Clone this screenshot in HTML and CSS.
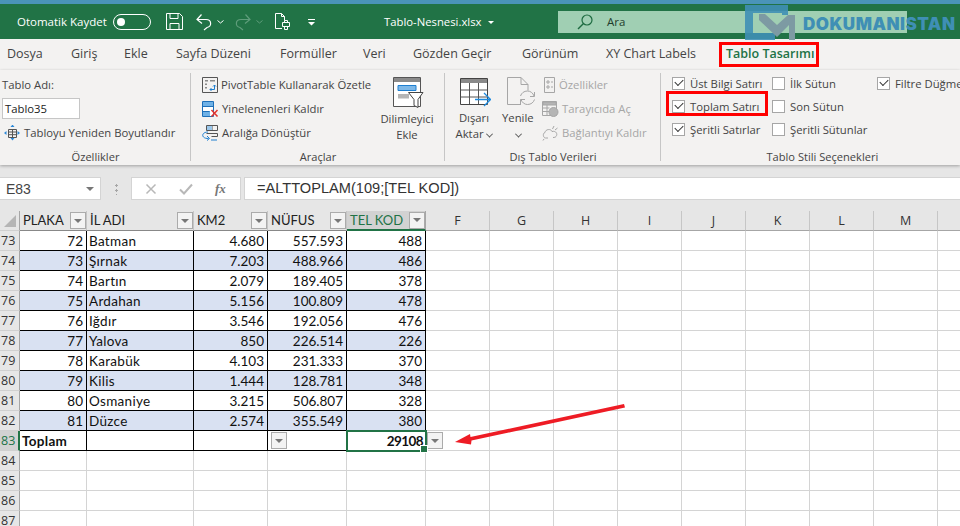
FILE: index.html
```html
<!DOCTYPE html>
<html lang="tr">
<head>
<meta charset="utf-8">
<title>Tablo-Nesnesi.xlsx</title>
<link rel="stylesheet" href="styles.css">
</head>
<body>
<div class="app">
  <div class="topstrip"></div>
  <header class="titlebar">
    <div class="qat">
      <span class="autosave">Otomatik Kaydet</span>
      <span class="toggle"><span class="knob"></span></span>
      <svg class="i-save" width="17" height="17" viewBox="0 0 17 17" fill="none" stroke="#fff"><path d="M.5.500h13l3 3v13H.5z"/><path d="M4 .5v5h8v-5M4 16.500v-6h9v6"/></svg>
      <svg class="i-undo" width="16" height="18" viewBox="0 0 16 18" fill="none" stroke="#fff" stroke-width="1.200"><path d="M1 6.500h9c6 0 6 7 1 8l-3 2.500"/><path d="M5.500 1.500 1 6.500l5 4"/></svg>
      <svg class="i-chev" width="7" height="4" viewBox="0 0 7 4" fill="none" stroke="#fff"><path d="m.5.500 3 2.500 3-2.500"/></svg>
      <svg class="i-redo" width="16" height="18" viewBox="0 0 16 18" fill="none" stroke="#5f9d7b" stroke-width="1.200"><path d="M15 6.500H6c-6 0-6 7-1 8l3 2.500"/><path d="M10.500 1.500 15 6.500l-5 4"/></svg>
      <svg class="i-chev dim" width="7" height="4" viewBox="0 0 7 4" fill="none" stroke="#5f9d7b"><path d="m.5.500 3 2.500 3-2.500"/></svg>
      <svg class="i-print" width="15" height="17" viewBox="0 0 15 17" fill="none" stroke="#fff"><path d="M7 15.500H.5V.5h6l3 3v4M6.500.5v3h3"/><path d="M7.500 9.500h7v4h-7zM9.500 9.500v-2h3v2M9.500 13.500v3h3v-3"/></svg>
      <svg class="i-more" width="9" height="7" viewBox="0 0 9 7" fill="#fff"><path d="M1 0h7v1H1zM1 3h7L4.500 6.500z"/></svg>
    </div>
    <div class="doc">Tablo-Nesnesi.xlsx <span class="caret"></span></div>
    <div class="search">
      <svg width="16" height="16" viewBox="0 0 16 16" fill="none" stroke="#1d6b40" stroke-width="1.200"><circle cx="10" cy="6" r="5"/><path d="M6.500 9.500 1 15" stroke-width="1.500"/></svg>
      <span>Ara</span>
    </div>
  </header>

  <nav class="tabs">
    <span>Dosya</span><span>Giriş</span><span>Ekle</span><span>Sayfa Düzeni</span><span>Formüller</span><span>Veri</span><span>Gözden Geçir</span><span>Görünüm</span><span>XY Chart Labels</span><span class="active">Tablo Tasarımı</span>
  </nav>

  <section class="ribbon">
    <div class="group g1">
      <div class="gbody props">
        <div class="plain">Tablo Adı:</div>
        <div class="namefield">Tablo35</div>
        <div class="cmd resize">
          <svg width="16" height="16" viewBox="0 0 16 16" fill="none"><path d="M4.500 4.500h8v8h-8zM4.500 7h8M4.500 9.700h8M8.500 4.500v8" stroke="#555"/><path d="M8.500 0 6.500 2.500h4zM8.500 16l-2-2.500h4zM0 8.500 2.500 6.500v4zM16 8.500l-2.500-2v4z" fill="#2b88d8" transform="translate(0 -.5)"/></svg>
          <span>Tabloyu Yeniden Boyutlandır</span>
        </div>
      </div>
      <div class="glabel">Özellikler</div>
    </div>

    <div class="group g2">
      <div class="gbody tools">
        <div class="cmdlist">
          <div class="cmd">
            <svg width="16" height="16" viewBox="0 0 16 16" fill="none"><path d="M.5.500h15v15H.5z" stroke="#555"/><path d="M3 3h3v1.500H3zM8 3h5v1.500H8zM3 6.500h2V8H3zM3 10h2v1.500H3z" fill="#8a8a8a"/><path d="M8 12.500h4.500V8M11 9.500 12.500 8 14 9.500M9.500 11 8 12.500 9.500 14" stroke="#1e7fd0"/></svg>
            <span>PivotTable Kullanarak Özetle</span>
          </div>
          <div class="cmd">
            <svg width="17" height="16" viewBox="0 0 17 16" fill="none"><path d="M.5.500h11v15H.5z" fill="#fff" stroke="#1e6fb8"/><path d="M1 1h10v4H1zM1 10h7v5H1z" fill="#6fb1e6"/><path d="M.5 5.500h11M.5 10.500h7" stroke="#1e6fb8"/><path d="m9.500 9 6 6.500m0-6.500-6 6.500" stroke="#e3342f" stroke-width="1.500"/></svg>
            <span>Yinelenenleri Kaldır</span>
          </div>
          <div class="cmd">
            <svg width="17" height="16" viewBox="0 0 17 16" fill="none"><path d="M4.500.500h11v5h-11zM10 .5v5M4.500 8.500h11v3h-6" stroke="#555"/><path d="M5 1h5v4H5z" fill="#9cc7ea"/><path d="M6 7C1.500 7-.5 10 1.500 12c1 1.200 3 1.500 5 1.500M5 11l2.500 2.500L5 15.500M9 15h6" stroke="#1e7fd0"/></svg>
            <span>Aralığa Dönüştür</span>
          </div>
        </div>
        <div class="bigbtn slicer">
          <svg width="31" height="31" viewBox="0 0 31 31" fill="none"><path d="M.5.500h27v29H.5z" stroke="#555" fill="#fff"/><path d="M1 1h26v4H1z" fill="#8a8a8a"/><path d="M5 8.500h18v5H5z" fill="#7db8e8" stroke="#1e7fd0"/><path d="M5 17h11v4.500H5z" fill="#b5b5b5"/><path d="M15.500 15.500h14.500l-5 7v8l-4-2v-6z" fill="#fff" stroke="#444"/></svg>
          <span>Dilimleyici<br>Ekle</span>
        </div>
      </div>
      <div class="glabel">Araçlar</div>
    </div>

    <div class="group g3">
      <div class="gbody external">
        <div class="bigbtn export">
          <svg width="31" height="31" viewBox="0 0 31 31" fill="none"><path d="M.5 1.500h27v26H.5z" stroke="#444" fill="#fff"/><path d="M1 2h26v4H1z" fill="#8a8a8a"/><path d="M.5 13h27M.5 20h27M9.500 6v21M18.500 6v21" stroke="#555"/><path d="M15 22.500h15M24 16l6.500 6.500L24 29" stroke="#1e8be0" stroke-width="1.300"/></svg>
          <span>Dışarı<br>Aktar <i class="chev"></i></span>
        </div>
        <div class="bigbtn refresh">
          <svg width="29" height="31" viewBox="0 0 29 31" fill="none" stroke="#a6a6a6"><path d="M14 27.500H.5V.5H14l7 7v6M14 .5v7h7"/><path d="M27 19c-1-3-3.500-5-6.500-5-3.500 0-6 2-7 5M14 22.500c1 3 3.500 5 6.500 5 3.500 0 6-2 7-5M27.500 15v4.500H23M13.500 27v-4.500H18"/></svg>
          <span>Yenile<br><i class="chev"></i></span>
        </div>
        <div class="cmdlist disabled">
          <div class="cmd">
            <svg width="14" height="16" viewBox="0 0 14 16" fill="none" stroke="#a6a6a6"><path d="M2.500.500h10v15h-10zM5 4h2v2H5zM5 9h2v2H5zM9 5h2M9 10h2"/></svg>
            <span>Özellikler</span>
          </div>
          <div class="cmd">
            <svg width="17" height="16" viewBox="0 0 17 16" fill="none" stroke="#a6a6a6"><path d="M.5.500h14v14H.5z"/><path d="M1 1h13v3H1z" fill="#b5b5b5"/><path d="M.5 7h7M.5 10.500h7M5 4v10.500"/><circle cx="11.500" cy="11" r="4.500" fill="#b5b5b5"/></svg>
            <span>Tarayıcıda Aç</span>
          </div>
          <div class="cmd">
            <svg width="17" height="16" viewBox="0 0 17 16" fill="none" stroke="#a6a6a6"><path d="M6 13H3.500C1 13 .5 8 3 7.500 3.500 4 9 3.500 10 6.500c4-1 6 2.500 4 5-.5.700-1.500 1-3 1M12 1l-1.500 3M15.500 3 13 5M2 14l-1 1.500"/></svg>
            <span>Bağlantıyı Kaldır</span>
          </div>
        </div>
      </div>
      <div class="glabel">Dış Tablo Verileri</div>
    </div>

    <div class="group g4">
      <div class="gbody options">
        <div class="optcol c1">
          <label class="opt"><span class="box on"></span>Üst Bilgi Satırı</label>
          <label class="opt"><span class="box on"></span>Toplam Satırı</label>
          <label class="opt"><span class="box on"></span>Şeritli Satırlar</label>
        </div>
        <div class="optcol c2">
          <label class="opt"><span class="box"></span>İlk Sütun</label>
          <label class="opt"><span class="box"></span>Son Sütun</label>
          <label class="opt"><span class="box"></span>Şeritli Sütunlar</label>
        </div>
        <div class="optcol c3">
          <label class="opt"><span class="box on"></span>Filtre Düğmesi</label>
        </div>
      </div>
      <div class="glabel">Tablo Stili Seçenekleri</div>
    </div>
  </section>

  <section class="formulabar">
    <div class="namebox"><span>E83</span><i class="tri"></i></div>
    <div class="dots"></div>
    <div class="fxbox">
      <svg width="12" height="12" viewBox="0 0 12 12" fill="none" stroke="#b8b8b8" stroke-width="1.500"><path d="m1.500 1.500 9 9m0-9-9 9"/></svg>
      <svg width="14" height="12" viewBox="0 0 14 12" fill="none" stroke="#b8b8b8" stroke-width="2"><path d="m1 6.500 4 4 8-9"/></svg>
      <span class="fx">fx</span>
    </div>
    <div class="formula">=ALTTOPLAM(109;[TEL KOD])</div>
  </section>

  <section class="sheet">
    <div class="row head">
      <div class="num corner"></div>
      <div class="hc">PLAKA<i class="fb"></i></div><div class="hc">İL ADI<i class="fb"></i></div><div class="hc">KM2<i class="fb"></i></div><div class="hc">NÜFUS<i class="fb"></i></div><div class="hc sel">TEL KOD<i class="fb"></i></div>
      <div class="ch">F</div><div class="ch">G</div><div class="ch">H</div><div class="ch">I</div><div class="ch">J</div><div class="ch">K</div><div class="ch">L</div><div class="ch">M</div><div class="ch"></div>
    </div>
    <div class="row"><div class="num">73</div><div class="c r">72</div><div class="c">Batman</div><div class="c r">4.680</div><div class="c r">557.593</div><div class="c r">488</div><div class="rest"></div></div>
    <div class="row band"><div class="num">74</div><div class="c r">73</div><div class="c">Şırnak</div><div class="c r">7.203</div><div class="c r">488.966</div><div class="c r">486</div><div class="rest"></div></div>
    <div class="row"><div class="num">75</div><div class="c r">74</div><div class="c">Bartın</div><div class="c r">2.079</div><div class="c r">189.405</div><div class="c r">378</div><div class="rest"></div></div>
    <div class="row band"><div class="num">76</div><div class="c r">75</div><div class="c">Ardahan</div><div class="c r">5.156</div><div class="c r">100.809</div><div class="c r">478</div><div class="rest"></div></div>
    <div class="row"><div class="num">77</div><div class="c r">76</div><div class="c">Iğdır</div><div class="c r">3.546</div><div class="c r">192.056</div><div class="c r">476</div><div class="rest"></div></div>
    <div class="row band"><div class="num">78</div><div class="c r">77</div><div class="c">Yalova</div><div class="c r">850</div><div class="c r">226.514</div><div class="c r">226</div><div class="rest"></div></div>
    <div class="row"><div class="num">79</div><div class="c r">78</div><div class="c">Karabük</div><div class="c r">4.103</div><div class="c r">231.333</div><div class="c r">370</div><div class="rest"></div></div>
    <div class="row band"><div class="num">80</div><div class="c r">79</div><div class="c">Kilis</div><div class="c r">1.444</div><div class="c r">128.781</div><div class="c r">348</div><div class="rest"></div></div>
    <div class="row"><div class="num">81</div><div class="c r">80</div><div class="c">Osmaniye</div><div class="c r">3.215</div><div class="c r">506.807</div><div class="c r">328</div><div class="rest"></div></div>
    <div class="row band"><div class="num">82</div><div class="c r">81</div><div class="c">Düzce</div><div class="c r">2.574</div><div class="c r">355.549</div><div class="c r">380</div><div class="rest"></div></div>
    <div class="row total">
      <div class="num on">83</div><div class="c b">Toplam</div><div class="c"></div><div class="c"></div><div class="c"><i class="fb"></i></div><div class="c r b active-cell">29108<i class="fb out"></i></div><div class="rest"></div>
    </div>
    <div class="row empty"><div class="num">84</div><div class="e"></div><div class="e"></div><div class="e"></div><div class="e"></div><div class="e"></div><div class="rest"></div></div>
    <div class="row empty"><div class="num">85</div><div class="e"></div><div class="e"></div><div class="e"></div><div class="e"></div><div class="e"></div><div class="rest"></div></div>
    <div class="row empty"><div class="num">86</div><div class="e"></div><div class="e"></div><div class="e"></div><div class="e"></div><div class="e"></div><div class="rest"></div></div>
    <div class="row empty"><div class="num">87</div><div class="e"></div><div class="e"></div><div class="e"></div><div class="e"></div><div class="e"></div><div class="rest"></div></div>
  </section>

  <div class="mark mark-tab"></div>
  <div class="mark mark-opt"></div>
  <svg class="arrow" width="172" height="42" viewBox="0 0 172 42"><path d="M0 38 15 30 15.500 33 169 0 170 3.500 16.500 36.500 16 40.500z" fill="#ee1c25"/></svg>
  <div class="watermark">
    <svg width="50" height="35" viewBox="0 0 50 35"><path d="M0 0H43V10H37V8H8V28H30V35H0z" fill="#3f8fb5" opacity=".9"/><path d="M14 9H20L32 20 43 10H50V35H44V20L32 32 14 15z" fill="#7d9aa3"/></svg>
    <span>DOKUMANISTAN</span>
  </div>
</div>
</body>
</html>
```
FILE: styles.css
```css
* { box-sizing: border-box; }
html, body { margin: 0; padding: 0; }
body { width: 960px; height: 526px; overflow: hidden; background: #fff; font-family: "Open Sans", "Noto Sans", sans-serif; font-size: 11.3px; color: #444; }
.app { position: relative; width: 960px; height: 526px; overflow: hidden; }

.topstrip { height: 4px; background: #4a94b8; }
.titlebar { height: 35px; background: #217346; display: flex; align-items: center; color: #fff; }
.qat { width: 384px; display: flex; align-items: center; padding-left: 17px; flex: none; }
.autosave { width: 96px; font-size: 11.5px; white-space: nowrap; }
.toggle { width: 38px; height: 16px; border: 1px solid #fff; border-radius: 8px; display: flex; align-items: center; padding-left: 3px; }
.knob { width: 8px; height: 8px; border-radius: 50%; background: #fff; }
.i-save { margin-left: 15px; }
.i-undo { margin-left: 13px; }
.i-chev { margin-left: 5px; margin-top: 1px; }
.i-redo { margin-left: 11px; }
.i-print { margin-left: 12px; }
.i-more { margin-left: 17px; margin-top: 1px; }
.doc { width: 174px; flex: none; font-size: 11.3px; white-space: nowrap; }
.caret { display: inline-block; width: 0; height: 0; border: 3px solid transparent; border-top: 3px solid #fff; border-bottom: 0; margin-left: 4px; vertical-align: 2px; }
.search { width: 349px; height: 22px; background: #a0cfb3; display: flex; align-items: center; padding-left: 19px; gap: 14px; color: #1f3d2d; font-size: 11.5px; flex: none; }

.tabs { height: 31px; background: #f3f2f1; display: grid; grid-template-columns: 64px 53px 52px 104px 83px 50px 109px 84px 120px 1fr; padding: 5px 0 0 7px; font-size: 12.5px; line-height: 20px; color: #444; white-space: nowrap; }
.tabs .active { color: #217346; font-weight: 600; }

.ribbon { height: 95px; background: #f3f2f1; display: flex; overflow: hidden; box-shadow: 0 1px 3px rgba(0,0,0,.3); position: relative; }
.group { height: 95px; flex: none; display: flex; flex-direction: column; position: relative; }
.group::after { content: ""; position: absolute; right: 0; top: 3px; width: 1px; height: 88px; background: #c6c6c6; }
.g1 { width: 191px; }
.g2 { width: 254px; }
.g3 { width: 216px; }
.g4 { flex: 1; }
.g4::after { display: none; }
.gbody { height: 78px; flex: none; }
.glabel { text-align: center; font-size: 11.1px; line-height: 14px; color: #444; margin-top: 2px; white-space: nowrap; }
.g4 .glabel { padding-left: 13px; }

.props { padding: 7px 0 0 2px; }
.plain { line-height: 16px; }
.namefield { width: 78px; height: 21px; margin-top: 5px; background: #fff; border: 1px solid #c6c6c6; padding-left: 2px; line-height: 19px; color: #222; }
.cmd { display: flex; align-items: center; height: 24px; white-space: nowrap; gap: 3px; }
.cmd span { margin-top: -2px; }
.resize { margin: 2px 0 0 2px; height: 24px; gap: 4px; }

.tools { display: flex; padding: 0 0 0 11px; }
.cmdlist { padding-top: 3px; }
.tools .cmdlist { width: 191px; }
.bigbtn { display: flex; flex-direction: column; align-items: center; text-align: center; line-height: 15.5px; }
.bigbtn span { display: block; margin-top: 3px; white-space: nowrap; }
.slicer { width: 30px; margin-top: 7px; }
.slicer span { margin-left: -12px; margin-right: -10px; }
.chev { display: inline-block; width: 5px; height: 5px; border-right: 1px solid #555; border-bottom: 1px solid #555; transform: rotate(45deg) translate(-1px,-1px); margin-left: 1px; }

.external { display: flex; padding-left: 0; }
.export { width: 60px; margin-top: 7px; padding-left: 1px; }
.export span { margin-top: 2px; margin-left: -3px; }
.export svg { margin-left: 0; }
.refresh { width: 35px; margin-top: 7px; align-items: flex-start; }
.refresh svg { margin-left: 2px; }
.refresh span { text-align: center; margin-left: -3px; margin-top: 2px; }
.disabled { color: #a6a6a6; margin-left: 2px; }

.options { display: flex; padding: 2px 0 0 11px; }
.optcol { display: flex; flex-direction: column; }
.c1 { width: 100px; }
.c2 { width: 105px; }
.opt { display: flex; align-items: center; height: 23px; white-space: nowrap; gap: 5px; }
.box { width: 13px; height: 13px; border: 1px solid #a6a6a6; background: #fff; flex: none; position: relative; }
.box.on::after { content: ""; position: absolute; left: 2px; top: 1px; width: 7px; height: 4px; border-left: 1px solid #333; border-bottom: 1px solid #333; transform: rotate(-45deg); }

.formulabar { height: 46px; background: #e6e6e6; display: flex; padding-top: 12px; align-items: flex-start; }
.namebox { width: 101px; height: 23px; background: #fff; border: 1px solid #d4d4d4; border-left: 0; display: flex; align-items: center; justify-content: space-between; padding: 0 6px; font: 14px "Liberation Sans", sans-serif; color: #444; }
.tri { width: 0; height: 0; border: 4px solid transparent; border-top: 4px solid #777; border-bottom: 0; }
.dots { width: 30px; height: 12px; margin-top: 6px; background: radial-gradient(circle, #a6a6a6 1px, transparent 1.2px) center top / 3px 5px repeat-y; }
.fxbox { width: 110px; height: 23px; background: #fff; border: 1px solid #d4d4d4; display: flex; align-items: center; gap: 22px; padding-left: 13px; }
.fx { font: italic bold 13px "Liberation Serif", serif; color: #777; }
.formula { flex: 1; height: 23px; margin-left: 3px; background: #fff; border: 1px solid #d4d4d4; border-right: 0; padding-left: 12px; font: 14.6px/21px "Liberation Sans", sans-serif; color: #333; white-space: nowrap; }

.sheet { font-family: Lato, "Liberation Sans", sans-serif; font-size: 13.5px; color: #111; }
.row { display: grid; grid-template-columns: 20px 67px 107px 74px 79px 79px repeat(9, 64px); grid-template-rows: 20px; height: 20px; line-height: 19px; }
.num { background: #e6e6e6; border-right: 1px solid #a6a6a6; border-bottom: 1px solid #d0d0d0; color: #333; font: 12.5px/19px "Open Sans", sans-serif; text-align: left; padding-left: 1px; overflow: hidden; white-space: nowrap; }
.num.on { background: #d2d2d2; color: #217346; border-right: 2px solid #217346; }
.corner { position: relative; }
.corner::after { content: ""; position: absolute; left: 4px; bottom: 3px; border-style: solid; border-width: 0 0 12px 12px; border-color: transparent transparent #b5b5b5 transparent; }
.hc { background: #e6e6e6; border-right: 1px solid #c6c6c6; border-bottom: 1px solid #888; padding: 0 0 0 3px; display: flex; justify-content: space-between; align-items: center; color: #222; white-space: nowrap; font-size: 13px; }
.hc.sel { background: #d2d2d2; color: #217346; border-bottom: 2px solid #217346; border-right-color: #a6a6a6; }
.ch { background: #e6e6e6; border-right: 1px solid #c6c6c6; border-bottom: 1px solid #a6a6a6; text-align: center; color: #333; font: 12.5px/19px "Open Sans", sans-serif; }
.fb { width: 16px; height: 17px; flex: none; background: #f3f3f3; border: 1px solid #ababab; display: flex; align-items: center; justify-content: center; }
.fb::before { content: ""; border: 4px solid transparent; border-top: 4px solid #777; border-bottom: 0; }
.c { border-right: 1px solid #000; border-bottom: 1px solid #000; padding: 1px 2px 0; white-space: nowrap; background: #fff; position: relative; letter-spacing: .3px; }
.c.r { text-align: right; padding-right: 3px; letter-spacing: 0; }
.band .c { background: #d9e1f2; }
.b { font-weight: 700; }
.total .c .fb { margin: 0 0 0 1px; }
.rest { grid-column: 7 / -1; border-bottom: 1px solid #d4d4d4; background: repeating-linear-gradient(to right, #fff 0 63px, #d4d4d4 63px 64px); }
.e { border-right: 1px solid #d4d4d4; border-bottom: 1px solid #d4d4d4; }
.c.r.active-cell { outline: 2px solid #217346; outline-offset: -1px; z-index: 2; letter-spacing: -.6px; padding-right: 2px; }
.active-cell::after { content: ""; position: absolute; right: -3px; bottom: -3px; width: 6px; height: 6px; background: #217346; border: 1px solid #fff; }
.fb.out { position: absolute; left: 80px; top: 1px; margin: 0 !important; }

.mark { position: absolute; border: 3px solid #f00; }
.mark-tab { left: 719px; top: 42px; width: 100px; height: 25px; }
.mark-opt { left: 666px; top: 91px; width: 102px; height: 25px; }
.arrow { position: absolute; left: 455px; top: 404px; }
.watermark { position: absolute; left: 745px; top: 5px; width: 215px; height: 42px; display: flex; align-items: flex-start; pointer-events: none; }
.watermark svg { flex: none; }
.watermark span { margin-top: 9px; margin-left: 8px; font: 900 17px/20px Inter, "Liberation Sans", sans-serif; color: #3f8fb5; letter-spacing: .5px; white-space: nowrap; }
```
